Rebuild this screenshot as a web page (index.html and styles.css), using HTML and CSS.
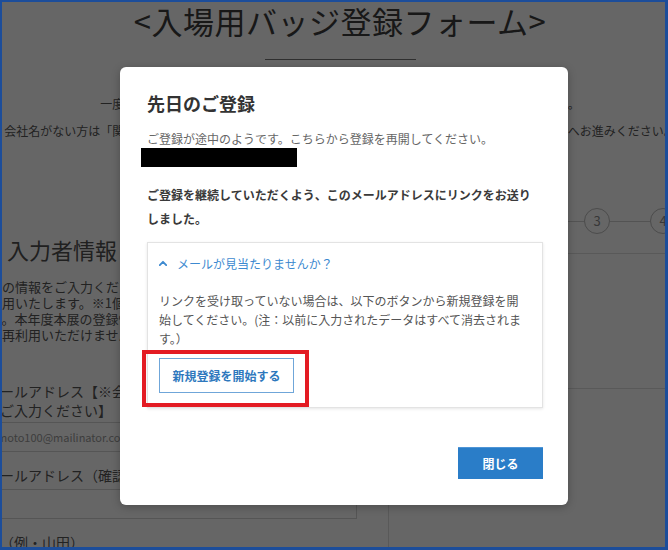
FILE: index.html
```html
<!DOCTYPE html>
<html lang="ja">
<head>
<meta charset="utf-8">
<title>入場用バッジ登録フォーム</title>
<link rel="stylesheet" href="styles.css">
</head>
<body>
<div class="screen">
  <div class="page">
    <header class="page-head">
      <h1 class="page-title">&lt;入場用バッジ登録フォーム&gt;</h1>
      <div class="title-rule"></div>
      <p class="intro">一度ご登録された方は、登録時のメールアドレスとパスワードでログインしてください。<br>会社名がない方は「関係者」と入力してください。会社名がある方は正式名称をご入力のうえ、次の画面へお進みください。</p>
    </header>
    <div class="columns">
      <section class="form-col">
        <h2 class="form-heading">入力者情報</h2>
        <p class="form-lead">記の情報をご入力ください。<br>利用いたします。※1個人情報は<br>で。本年度本展の登録情報<br>は再利用いただけません。</p>
        <div class="field">
          <div class="field-label">メールアドレス【※会社のメールアドレス<br>をご入力ください】</div>
          <div class="field-box">yamamoto100@mailinator.com</div>
        </div>
        <div class="field">
          <div class="field-label">メールアドレス（確認用）</div>
          <div class="field-box"></div>
        </div>
        <div class="field">
          <div class="field-label">姓（例・山田）</div>
        </div>
      </section>
      <aside class="side-col">
        <div class="steps">
          <span class="step">1</span><span class="step-line"></span>
          <span class="step">2</span><span class="step-line"></span>
          <span class="step">3</span><span class="step-line"></span>
          <span class="step">4</span>
        </div>
        <div class="side-panel"></div>
      </aside>
    </div>
  </div>

  <div class="overlay">
    <div class="modal" role="dialog">
      <h2 class="modal-title">先日のご登録</h2>
      <p class="notice">ご登録が途中のようです。こちらから登録を再開してください。</p>
      <span class="redacted"></span>
      <p class="sent">ご登録を継続していただくよう、このメールアドレスにリンクをお送りしました。</p>
      <div class="help-box">
        <div class="help-toggle">
          <svg class="chevron" width="8" height="6" viewBox="0 0 8 6" aria-hidden="true"><polyline points="0.8,5.2 4,1.8 7.2,5.2" fill="none" stroke="#3d8ad0" stroke-width="1.8" stroke-linecap="round" stroke-linejoin="round"/></svg>
          <span>メールが見当たりませんか？</span>
        </div>
        <p class="help-text">リンクを受け取っていない場合は、以下のボタンから新規登録を開<br>始してください。(注：以前に入力されたデータはすべて消去されま<br>す。）</p>
        <button class="restart-btn" type="button">新規登録を開始する</button>
      </div>
      <div class="modal-actions">
        <button class="close-btn" type="button">閉じる</button>
      </div>
      <div class="annotation"></div>
    </div>
  </div>
</div>
</body>
</html>
```
FILE: styles.css
```css
html, body {
  margin: 0;
  padding: 0;
}
body {
  font-family: "Noto Sans CJK JP", "Noto Sans", sans-serif;
  background: #ffffff;
}
.screen {
  position: relative;
  width: 668px;
  height: 550px;
  box-sizing: border-box;
  border-style: solid;
  border-color: #1c4d9a;
  border-width: 2px 3px 3px 2px;
  overflow: hidden;
  background: #ffffff;
}

/* ---------- background page ---------- */
.page {
  width: 720px;
  margin-left: -22px;
  color: #555555;
}
.page-title {
  margin: 0;
  font-size: 31px;
  font-weight: 400;
  line-height: 37px;
  letter-spacing: 0.5px;
  text-align: center;
  color: #3c3c3c;
}
.title-rule {
  width: 151px;
  height: 1px;
  margin: 20px auto 0;
  background: #777777;
}
.intro {
  margin: 30px 0 0;
  font-size: 12px;
  line-height: 27px;
  text-align: center;
  white-space: nowrap;
}
.columns {
  display: grid;
  grid-template-columns: 408px 1fr;
  margin-top: 46px;
}
.form-col {
  padding: 44px 31px 0 6px;
}
.form-heading {
  margin: 0;
  padding-left: 21px;
  font-size: 22px;
  font-weight: 400;
  line-height: 30px;
  color: #505050;
}
.form-lead {
  margin: 15px 0 0 3px;
  font-size: 13px;
  line-height: 16px;
  white-space: nowrap;
}
.field {
  margin-top: 14px;
}
.field:first-of-type {
  margin-top: 39px;
}
.field-label {
  font-size: 14px;
  line-height: 19px;
  white-space: nowrap;
  margin-bottom: 2px;
}
.field:nth-of-type(2) .field-label {
  margin-bottom: 4px;
}
.field-box {
  height: 30px;
  box-sizing: border-box;
  margin-left: -26px;
  padding-left: 8px;
  border: 1px solid #d4d4d4;
  font-size: 11px;
  line-height: 28px;
  color: #9a9a9a;
  white-space: nowrap;
}
.side-col {
  border-left: 1px solid #dedede;
  padding: 18px 0 0 63px;
  min-height: 400px;
}
.steps {
  display: flex;
  align-items: center;
}
.step {
  flex: 0 0 auto;
  width: 26px;
  height: 26px;
  box-sizing: border-box;
  border: 1px solid #bcbcbc;
  border-radius: 50%;
  font-size: 13px;
  line-height: 24px;
  text-align: center;
  color: #8c8c8c;
}
.step-line {
  flex: 0 0 40px;
  height: 1px;
  background: #cfcfcf;
}
.side-panel {
  margin: 19px 0 0 -63px;
  height: 134px;
  border-top: 1px solid #dedede;
  border-bottom: 1px solid #dedede;
}

/* ---------- overlay & modal ---------- */
.overlay {
  position: absolute;
  inset: 0;
  padding: 65px 0 0 118px;
  background: rgba(0, 0, 0, 0.6);
}
.modal {
  position: relative;
  width: 448px;
  height: 438px;
  box-sizing: border-box;
  padding: 24px 25px 0 27px;
  background: #ffffff;
  border-radius: 6px;
  box-shadow: 0 2px 8px rgba(0, 0, 0, 0.25);
}
.modal-title {
  margin: 0;
  font-size: 18px;
  font-weight: 700;
  line-height: 24px;
  color: #333333;
}
.notice {
  margin: 15px 0 0;
  font-size: 12px;
  line-height: 18px;
  color: #666666;
}
.redacted {
  display: block;
  width: 156px;
  height: 19px;
  margin-left: -6px;
  background: #000000;
}
.sent {
  max-width: 390px;
  margin: 16px 0 0;
  font-size: 12px;
  font-weight: 700;
  line-height: 24px;
  color: #3a3a3a;
}
.help-box {
  margin-top: 11px;
  padding: 10px 11px 14px 11px;
  border: 1px solid #e3e3e3;
  box-shadow: 0 1px 3px rgba(0, 0, 0, 0.1);
}
.help-toggle {
  display: flex;
  align-items: center;
  gap: 10px;
  height: 20px;
  font-size: 12px;
  color: #3d8ad0;
}
.chevron {
  display: block;
  flex: 0 0 auto;
}
.help-text {
  margin: 18px 0 0;
  font-size: 12px;
  line-height: 19px;
  color: #555555;
  white-space: nowrap;
}
.restart-btn {
  display: block;
  width: 135px;
  height: 35px;
  margin-top: 10px;
  padding: 0;
  border: 1px solid #6fa6d9;
  background: #ffffff;
  font-family: "Noto Sans CJK JP", "Noto Sans", sans-serif;
  font-size: 12px;
  font-weight: 700;
  color: #2e78bd;
}
.modal-actions {
  display: flex;
  justify-content: flex-end;
  margin-top: 39px;
}
.close-btn {
  width: 85px;
  height: 32px;
  padding: 0;
  border: none;
  border-top: 1px solid #4f95d6;
  background: #2a7dc8;
  font-family: "Noto Sans CJK JP", "Noto Sans", sans-serif;
  font-size: 12px;
  font-weight: 700;
  color: #ffffff;
}
.annotation {
  position: absolute;
  left: 22px;
  top: 283px;
  width: 167px;
  height: 57px;
  box-sizing: border-box;
  border: 4px solid #e31b23;
}
```
